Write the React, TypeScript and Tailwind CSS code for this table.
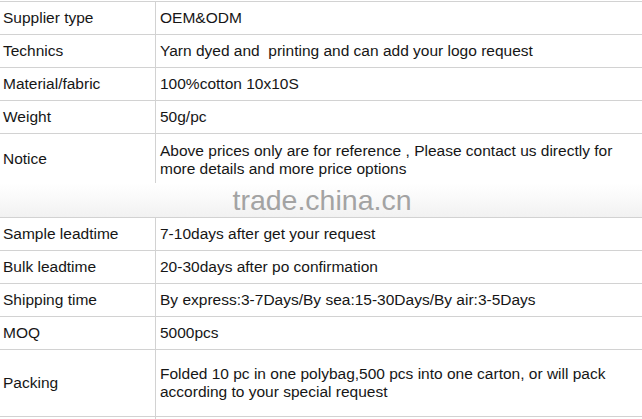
const ROWS_TOP = [
  { label: "Supplier type", value: "OEM&ODM" },
  { label: "Technics", value: "Yarn dyed and  printing and can add your logo request" },
  { label: "Material/fabric", value: "100%cotton 10x10S" },
  { label: "Weight", value: "50g/pc" },
];

const ROWS_BOTTOM = [
  { label: "Sample leadtime", value: "7-10days after get your request" },
  { label: "Bulk leadtime", value: "20-30days after po confirmation" },
  { label: "Shipping time", value: "By express:3-7Days/By sea:15-30Days/By air:3-5Days" },
  { label: "MOQ", value: "5000pcs" },
];

const Row = ({ label, value, h }: { label: string; value: React.ReactNode; h: string }) => (
  <div className={`grid grid-cols-[156px_1fr] border-t border-[#d2d2d2] ${h}`}>
    <div className="flex items-center pl-[3px] border-r border-[#d2d2d2]">{label}</div>
    <div className="flex items-center pl-[4px] pr-2 whitespace-pre-wrap">{value}</div>
  </div>
);

export default function App() {
  return (
    <div className="w-[642px] h-[419px] bg-white font-['Liberation_Sans',Arial,sans-serif] text-[15.5px] leading-[18px] text-[#161616] overflow-hidden pt-px">
      {ROWS_TOP.map((r) => (
        <Row key={r.label} label={r.label} value={r.value} h="h-[33px]" />
      ))}

      <Row
        label="Notice"
        h="h-[50px]"
        value={
          <span className="pt-[2px]">
            Above prices only are for reference , Please contact us directly for
            <br />
            more details and more price options
          </span>
        }
      />

      <div className="h-[34px] flex items-center justify-center bg-gradient-to-b from-white via-[#f9f9f9] to-[#f1f1f1]">
        <span className="text-[28.5px] leading-none text-[#a3a3a3] pl-[2px]">trade.china.cn</span>
      </div>

      {ROWS_BOTTOM.map((r) => (
        <Row key={r.label} label={r.label} value={r.value} h="h-[33px]" />
      ))}

      <Row
        label="Packing"
        h="h-[67px]"
        value={
          <span>
            Folded 10 pc in one polybag,500 pcs into one carton, or will pack
            <br />
            according to your special request
          </span>
        }
      />
      <div className="grid grid-cols-[156px_1fr] border-t border-[#d2d2d2] h-[4px]">
        <div className="border-r border-[#d2d2d2]" />
        <div />
      </div>
    </div>
  );
}
